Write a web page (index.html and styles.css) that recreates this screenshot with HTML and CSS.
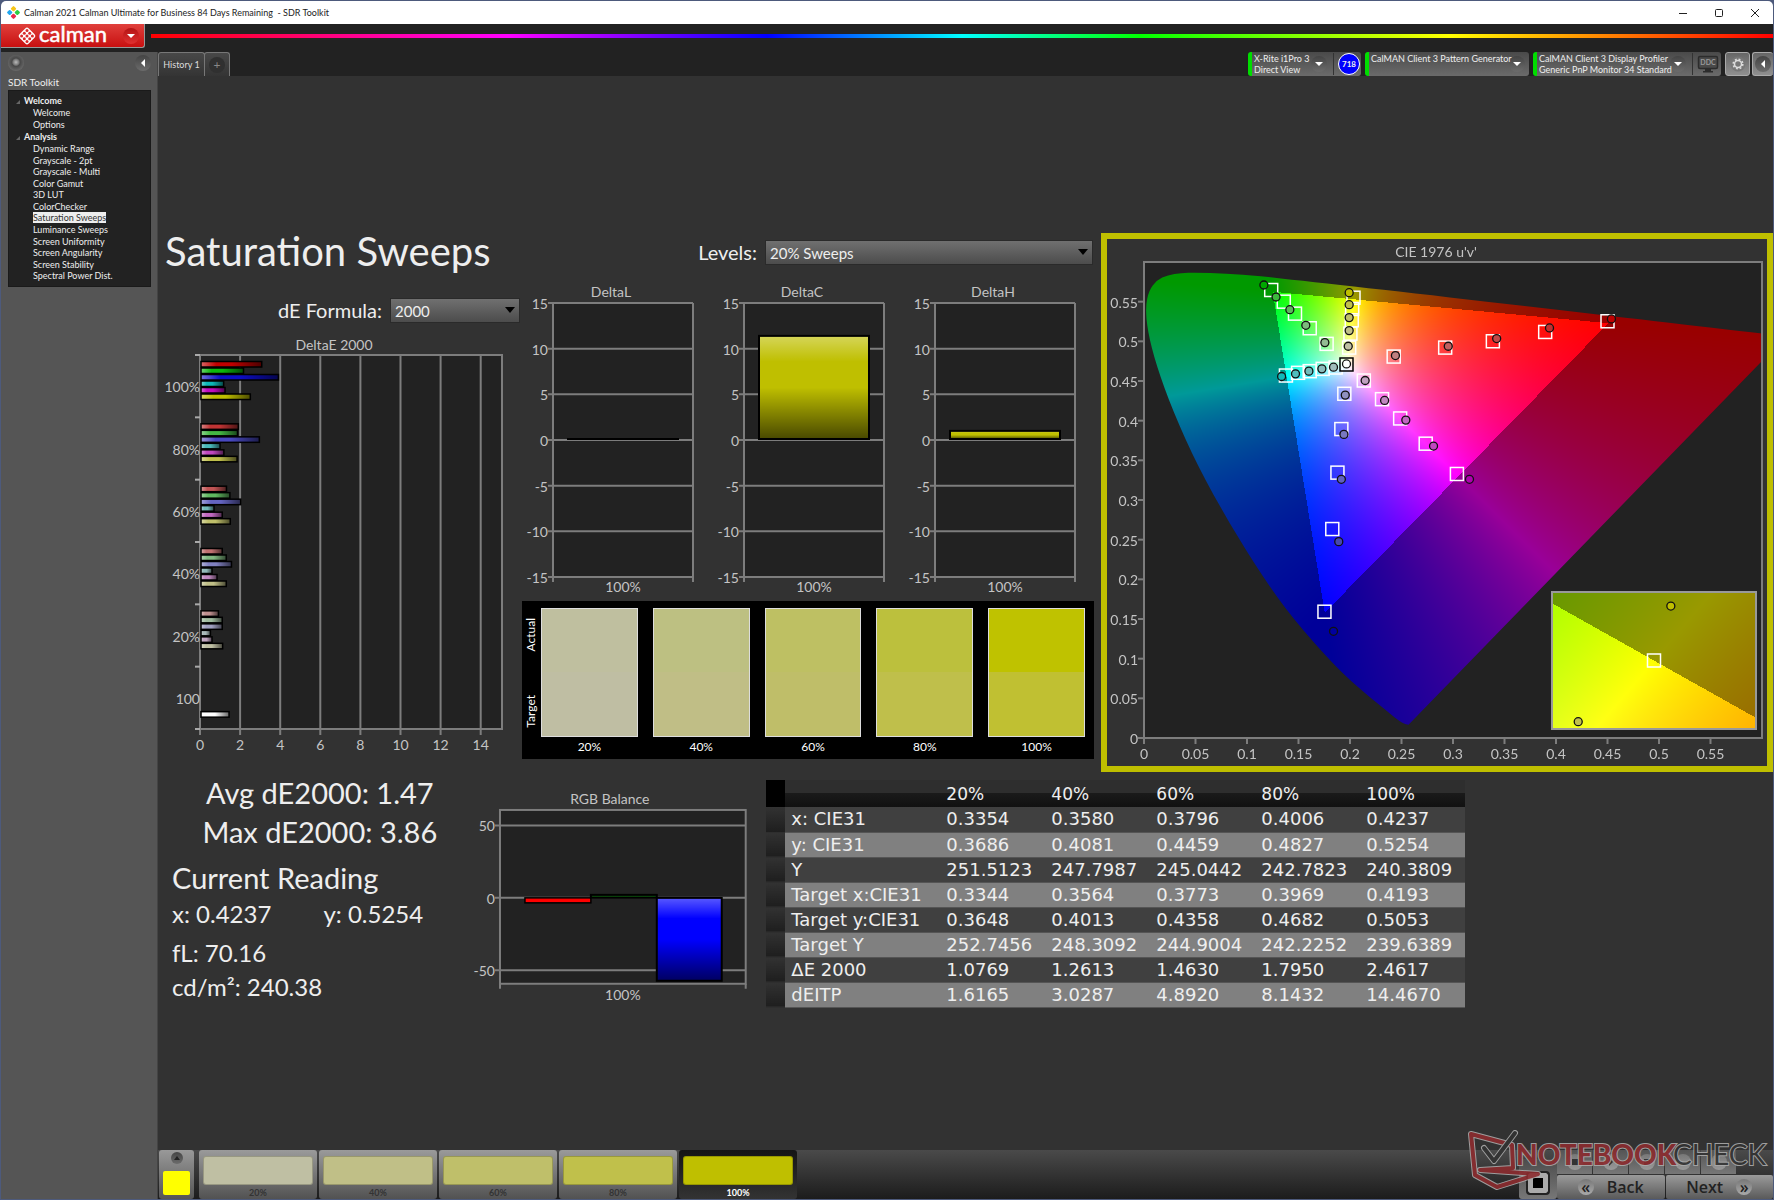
FILE: index.html
```html
<!DOCTYPE html>
<html lang="en">
<head>
    <meta charset="UTF-8">
    <meta name="viewport" content="width=device-width, initial-scale=1.0">
    <title>Calman 2021 - SDR Toolkit</title>
    <link rel="stylesheet" href="styles.css">
</head>
<body>
    <!-- shared bar shading -->
    <svg class="defs" width="0" height="0" aria-hidden="true">
        <defs>
            <linearGradient id="shadeV" x1="0" y1="0" x2="0" y2="1">
                <stop offset="0" stop-color="#fff" stop-opacity="0.35"/>
                <stop offset="0.25" stop-color="#fff" stop-opacity="0"/>
                <stop offset="0.5" stop-color="#000" stop-opacity="0"/>
                <stop offset="1" stop-color="#000" stop-opacity="0.62"/>
            </linearGradient>
            <linearGradient id="shadeH" x1="0" y1="0" x2="1" y2="0">
                <stop offset="0" stop-color="#fff" stop-opacity="0.4"/>
                <stop offset="0.25" stop-color="#fff" stop-opacity="0"/>
                <stop offset="0.5" stop-color="#000" stop-opacity="0"/>
                <stop offset="1" stop-color="#000" stop-opacity="0.6"/>
            </linearGradient>
        </defs>
    </svg>

    <div class="titlebar">
        <svg class="app-icon" width="13" height="13" viewBox="0 0 13 13">
            <rect x="4.4" y="0.6" width="4.2" height="4.2" rx="1" fill="#f6c518" transform="rotate(45 6.5 2.7)"/>
            <rect x="0.6" y="4.4" width="4.2" height="4.2" rx="1" fill="#22a7f0" transform="rotate(45 2.7 6.5)"/>
            <rect x="8.2" y="4.4" width="4.2" height="4.2" rx="1" fill="#2ecc40" transform="rotate(45 10.3 6.5)"/>
            <rect x="4.4" y="8.2" width="4.2" height="4.2" rx="1" fill="#e8274b" transform="rotate(45 6.5 10.3)"/>
        </svg>
        <span class="window-title">Calman 2021 Calman Ultimate for Business 84 Days Remaining &nbsp;- SDR Toolkit</span>
        <div class="window-buttons">
            <button aria-label="Minimize"><svg width="10" height="10" viewBox="0 0 10 10"><path d="M1 5.5h8" stroke="#222"/></svg></button>
            <button aria-label="Maximize"><svg width="10" height="10" viewBox="0 0 10 10"><rect x="1.5" y="1.5" width="7" height="7" rx="1" fill="none" stroke="#222"/></svg></button>
            <button aria-label="Close"><svg width="10" height="10" viewBox="0 0 10 10"><path d="M1 1l8 8M9 1l-8 8" stroke="#222"/></svg></button>
        </div>
    </div>

    <div class="brandbar">
        <button class="brand">
            <svg width="20" height="20" viewBox="0 0 20 20">
                <rect x="3.4" y="3.4" width="13.2" height="13.2" rx="2.5" fill="#fff" transform="rotate(45 10 10)"/>
                <g fill="#d92a2a">
                    <circle cx="10" cy="4.6" r="1.5"/><circle cx="7.3" cy="7.3" r="1.5"/><circle cx="12.7" cy="7.3" r="1.5"/>
                    <circle cx="4.6" cy="10" r="1.5"/><circle cx="10" cy="10" r="1.5"/><circle cx="15.4" cy="10" r="1.5"/>
                    <circle cx="7.3" cy="12.7" r="1.5"/><circle cx="12.7" cy="12.7" r="1.5"/><circle cx="10" cy="15.4" r="1.5"/>
                </g>
            </svg>
            <span class="brand-name">calman</span>
            <span class="round red"><i class="tri down"></i></span>
        </button>
        <div class="rainbow"></div>
    </div>

    <div class="layout">
        <aside class="sidebar">
            <div class="sidebar-top">
                <span class="round knob"></span>
                <button class="round" aria-label="Collapse"><i class="tri left"></i></button>
            </div>
            <div class="sidebar-title">SDR Toolkit</div>
            <nav class="tree">
                <h4>Welcome</h4>
                <ul>
                    <li><a href="#">Welcome</a></li>
                    <li><a href="#">Options</a></li>
                </ul>
                <h4>Analysis</h4>
                <ul>
                    <li><a href="#">Dynamic Range</a></li>
                    <li><a href="#">Grayscale - 2pt</a></li>
                    <li><a href="#">Grayscale - Multi</a></li>
                    <li><a href="#">Color Gamut</a></li>
                    <li><a href="#">3D LUT</a></li>
                    <li><a href="#">ColorChecker</a></li>
                    <li><a href="#" class="active">Saturation Sweeps</a></li>
                    <li><a href="#">Luminance Sweeps</a></li>
                    <li><a href="#">Screen Uniformity</a></li>
                    <li><a href="#">Screen Angularity</a></li>
                    <li><a href="#">Screen Stability</a></li>
                    <li><a href="#">Spectral Power Dist.</a></li>
                </ul>
            </nav>
        </aside>

        <main class="main">
            <div class="toolbar">
                <button class="tab">History 1</button>
                <button class="tab add" aria-label="Add history"><span class="round plus">+</span></button>
                <div class="devices">
                    <div class="device meter">
                        <button class="device-name">X-Rite i1Pro 3<br>Direct View</button>
                        <span class="round"><i class="tri down"></i></span>
                        <span class="split"></span>
                        <span class="badge">718</span>
                    </div>
                    <div class="device generator">
                        <button class="device-name">CalMAN Client 3 Pattern Generator</button>
                        <span class="round"><i class="tri down"></i></span>
                    </div>
                    <div class="device display">
                        <button class="device-name">CalMAN Client 3 Display Profiler<br>Generic PnP Monitor 34 Standard</button>
                        <span class="round"><i class="tri down"></i></span>
                        <span class="split"></span>
                        <svg class="monitor" width="22" height="18" viewBox="0 0 22 18">
                            <rect x="1.5" y="1.5" width="19" height="12" rx="1.5" fill="#4a4a4a" stroke="#2c2c2c" stroke-width="1.5"/>
                            <path d="M8 14h6v2H8zM6 16h10v1.5H6z" fill="#2c2c2c"/>
                            <text x="11" y="10" text-anchor="middle" class="ddc">DDC</text>
                        </svg>
                    </div>
                    <button class="square" aria-label="Settings">
                        <svg width="16" height="16" viewBox="0 0 16 16">
                            <circle cx="8" cy="8" r="7.5" fill="#777"/>
                            <circle cx="8" cy="8" r="3.5" fill="none" stroke="#ddd" stroke-width="1.5"/>
                            <circle cx="8" cy="8" r="4.8" fill="none" stroke="#ddd" stroke-width="1.6" stroke-dasharray="1.9 1.87"/>
                        </svg>
                    </button>
                    <button class="square last" aria-label="Expand"><span class="round"><i class="tri left"></i></span></button>
                </div>
            </div>

            <div class="workspace">
                <section class="upper">
                    <div class="col-left">
                        <h1>Saturation Sweeps</h1>
                        <div class="field formula">
                            <label for="formula">dE Formula:</label>
                            <div class="select"><select id="formula"><option>2000</option></select></div>
                        </div>
                        <svg id="deltaE" class="chart" viewBox="0 0 360 430"></svg>
                    </div>
                    <div class="col-mid">
                        <div class="field levels">
                            <label for="levels">Levels:</label>
                            <div class="select"><select id="levels"><option>20% Sweeps</option></select></div>
                        </div>
                        <div class="deltas">
                            <svg id="deltaL" class="chart" viewBox="0 0 191 320"></svg>
                            <svg id="deltaC" class="chart" viewBox="0 0 191 320"></svg>
                            <svg id="deltaH" class="chart" viewBox="0 0 191 320"></svg>
                        </div>
                        <div class="swatches">
                            <div class="side"><span>Actual</span><span>Target</span></div>
                            <div class="swatch s20"><div class="pair"></div><span>20%</span></div>
                            <div class="swatch s40"><div class="pair"></div><span>40%</span></div>
                            <div class="swatch s60"><div class="pair"></div><span>60%</span></div>
                            <div class="swatch s80"><div class="pair"></div><span>80%</span></div>
                            <div class="swatch s100"><div class="pair"></div><span>100%</span></div>
                        </div>
                    </div>
                    <div class="cie">
                        <canvas id="cieCanvas" width="660" height="527"></canvas>
                        <svg id="cieAxes" class="chart" viewBox="0 0 660 527"></svg>
                    </div>
                </section>

                <section class="lower">
                    <div class="readings">
                        <p class="big center">Avg dE2000: 1.47</p>
                        <p class="big center">Max dE2000: 3.86</p>
                        <p class="big current">Current Reading</p>
                        <p class="xy"><span>x: 0.4237</span><span>y: 0.5254</span></p>
                        <p class="lum">fL: 70.16</p>
                        <p>cd/m²: 240.38</p>
                    </div>
                    <svg id="rgb" class="chart" viewBox="0 0 289 240"></svg>
                    <table class="data">
                        <thead>
                            <tr><th class="handle"></th><th></th><th>20%</th><th>40%</th><th>60%</th><th>80%</th><th>100%</th></tr>
                        </thead>
                        <tbody>
                            <tr><td class="handle"></td><td>x: CIE31</td><td>0.3354</td><td>0.3580</td><td>0.3796</td><td>0.4006</td><td>0.4237</td></tr>
                            <tr><td class="handle"></td><td>y: CIE31</td><td>0.3686</td><td>0.4081</td><td>0.4459</td><td>0.4827</td><td>0.5254</td></tr>
                            <tr><td class="handle"></td><td>Y</td><td>251.5123</td><td>247.7987</td><td>245.0442</td><td>242.7823</td><td>240.3809</td></tr>
                            <tr><td class="handle"></td><td>Target x:CIE31</td><td>0.3344</td><td>0.3564</td><td>0.3773</td><td>0.3969</td><td>0.4193</td></tr>
                            <tr><td class="handle"></td><td>Target y:CIE31</td><td>0.3648</td><td>0.4013</td><td>0.4358</td><td>0.4682</td><td>0.5053</td></tr>
                            <tr><td class="handle"></td><td>Target Y</td><td>252.7456</td><td>248.3092</td><td>244.9004</td><td>242.2252</td><td>239.6389</td></tr>
                            <tr><td class="handle"></td><td>ΔE 2000</td><td>1.0769</td><td>1.2613</td><td>1.4630</td><td>1.7950</td><td>2.4617</td></tr>
                            <tr><td class="handle"></td><td>dEITP</td><td>1.6165</td><td>3.0287</td><td>4.8920</td><td>8.1432</td><td>14.4670</td></tr>
                        </tbody>
                    </table>
                </section>
            </div>

            <div class="bottombar">
                <button class="current-color" aria-label="Current color"><span class="round up"><i class="tri"></i></span><span class="chip"></span></button>
                <button class="level l20"><span class="chip"></span>20%</button>
                <button class="level l40"><span class="chip"></span>40%</button>
                <button class="level l60"><span class="chip"></span>60%</button>
                <button class="level l80"><span class="chip"></span>80%</button>
                <button class="level l100 selected"><span class="chip"></span>100%</button>
                <div class="controls">
                    <button class="stop" aria-label="Stop"><span></span></button>
                    <div class="nav">
                        <div class="transport">
                            <button aria-label="Stop reading"><span class="round"><i class="sq"></i></span></button>
                            <button aria-label="Play"><span class="round"><i class="tri play"></i></span></button>
                            <button aria-label="Series"><span class="round"><i class="sq"></i></span></button>
                            <button aria-label="Loop"><span class="round"></span></button>
                            <button aria-label="Refresh"><span class="round"></span></button>
                        </div>
                        <div class="pager">
                            <button><span class="round">«</span>Back</button>
                            <button>Next<span class="round">»</span></button>
                        </div>
                    </div>
                </div>
            </div>
        </main>
    </div>

    <svg class="watermark" width="306" height="64" viewBox="0 0 306 64">
        <g fill="none" stroke-linejoin="round" stroke-linecap="round">
            <path d="M3 6L44 17L45 40L12 42L70 46L29 59L7 47Z" stroke="#aaa" stroke-width="6"/>
            <path d="M3 6L44 17L45 40L12 42L70 46L29 59L7 47Z" stroke="#8c2c2f" stroke-width="4"/>
            <path d="M16 20L26 33L47 5" stroke="#aaa" stroke-width="6"/>
            <path d="M16 20L26 33L47 5" stroke="#333" stroke-width="4"/>
        </g>
        <text x="48" y="37" class="wm-note">NOTEBOOK</text>
        <text x="205" y="37" class="wm-check">CHECK</text>
    </svg>

    <script src="charts.js"></script>
</body>
</html>
```
FILE: styles.css
```css
* {
    box-sizing: border-box;
}
body {
    margin: 0;
    padding: 1px;
    min-height: 100vh;
    display: flex;
    flex-direction: column;
    background: #4d5a7c;
    font-family: Lato, "Open Sans", sans-serif;
    color: #eee;
}
button {
    font: inherit;
    color: inherit;
    border: 0;
    padding: 0;
    background: none;
}
h1, h4, p, ul {
    margin: 0;
    padding: 0;
}
.defs {
    position: absolute;
}

/* window frame */
.titlebar {
    height: 23px;
    display: flex;
    align-items: center;
    gap: 4px;
    padding: 0 13px 0 6px;
    background: #fff;
    color: #222;
    font-size: 9px;
    border-radius: 5px 5px 0 0;
}
.window-title {
    flex: 1;
}
.window-buttons {
    display: flex;
    gap: 26px;
}
.window-buttons button {
    width: 10px;
    height: 10px;
    line-height: 0;
}
.brandbar {
    height: 28px;
    display: flex;
    gap: 6px;
    background: #222;
}
.brand {
    width: 144px;
    height: 24px;
    display: flex;
    align-items: center;
    gap: 2px;
    padding: 0 5px 0 16px;
    background: linear-gradient(#e0403c, #c81010);
    border-radius: 0 0 3px 0;
    border-right: 1px solid #999;
    border-bottom: 1px solid #999;
}
.brand-name {
    flex: 1;
    font-size: 22px;
    line-height: 20px;
    text-align: left;
    padding-bottom: 3px;
    color: #fff;
    -webkit-text-stroke: 0.5px #fff;
}
.rainbow {
    flex: 1;
    height: 4px;
    margin-top: 10px;
    background: linear-gradient(to right, #f00, #f0f 22%, #00f 38%, #0ff 50%, #0f0 61%, #ff0 80%, #f00);
}

/* small round buttons */
.round {
    width: 16px;
    height: 16px;
    flex: none;
    display: flex;
    align-items: center;
    justify-content: center;
    border-radius: 50%;
    background: linear-gradient(#444, #6c6c6c);
}
.round.red {
    background: linear-gradient(#b41414, #e03030);
}
.round.knob {
    background: radial-gradient(circle at 50% 45%, #bbb 0, #777 25%, #484848 35%, #666 70%);
}
.tri {
    border: 4px solid transparent;
}
.tri.down {
    border-top-color: #fff;
    border-bottom-width: 0;
}
.tri.left {
    border-right-color: #fff;
    border-left-width: 0;
}

.layout {
    flex: 1;
    display: flex;
}

/* workflow tree */
.sidebar {
    width: 157px;
    padding: 3px 6px 3px 7px;
    background: #555;
    border-right: 1px solid #444;
}
.sidebar-top {
    display: flex;
    justify-content: space-between;
}
.sidebar-title {
    margin-top: 4px;
    font-size: 10px;
    line-height: 14px;
}
.tree {
    margin-top: 1px;
    height: 197px;
    padding: 4px 0 0 15px;
    background: #222;
    border: 1px solid #1a1a1a;
    font-size: 9px;
}
.tree h4 {
    position: relative;
    font-size: 9px;
    line-height: 12px;
}
.tree h4::before {
    content: "";
    position: absolute;
    left: -8px;
    top: 5px;
    border: 2px solid transparent;
    border-right-color: #666;
    border-bottom-color: #666;
}
.tree ul {
    height: 24px;
    padding-left: 9px;
    list-style: none;
    display: grid;
    grid-auto-rows: 1fr;
}
.tree ul:last-child {
    height: 139px;
}
.tree li {
    line-height: 11px;
}
.tree a {
    color: #eee;
    text-decoration: none;
}
.tree .active {
    background: #eee;
    color: #333;
}

/* toolbar */
.main {
    flex: 1;
    min-width: 0;
    display: flex;
    flex-direction: column;
    background: #323232;
}
.toolbar {
    height: 24px;
    display: flex;
    background: #222;
}
.tab {
    width: 47px;
    font-size: 9px;
    color: #ddd;
    background: linear-gradient(#484848, #343434);
    border: 1px solid #777;
    border-bottom: 0;
    border-radius: 3px 3px 0 0;
}
.tab.add {
    width: 26px;
    padding-left: 4px;
    margin-left: -1px;
}
.round.plus {
    background: #303030;
    color: #888;
    font-size: 12px;
}
.devices {
    margin-left: auto;
    display: flex;
    gap: 4px;
}
.device {
    display: flex;
    align-items: center;
    gap: 4px;
    padding: 0 4px 0 2px;
    border-left: 4px solid #0d0;
    border-radius: 3px;
    background: linear-gradient(#4a4a4a, #6b6b6b);
}
/* long names run over the edge of the round button */
.device-name {
    position: relative;
    z-index: 1;
    flex: 1;
    min-width: 0;
    align-self: flex-start;
    font-size: 9px;
    line-height: 11px;
    padding-top: 1px;
    text-align: left;
    white-space: nowrap;
}
.meter {
    width: 113px;
    padding-right: 1px;
}
.generator {
    width: 164px;
}
.display {
    width: 188px;
    padding-right: 2px;
}
.split {
    width: 1px;
    height: 22px;
    margin-left: 2px;
    background: #333;
}
.badge {
    width: 22px;
    height: 22px;
    flex: none;
    border: 1px solid #fff;
    border-radius: 50%;
    background: #00f;
    font-size: 8px;
    font-weight: bold;
    line-height: 20px;
    text-align: center;
}
.monitor {
    flex: none;
}
.ddc {
    font-size: 7px;
    font-weight: bold;
    fill: #999;
}
.square {
    width: 25px;
    display: flex;
    align-items: center;
    justify-content: center;
    border: 1px solid #aaa;
    border-radius: 3px;
    background: linear-gradient(#666, #909090);
}
.square.last {
    width: 21px;
    margin-left: -2px;
    border-right: 0;
}

/* workspace */
.workspace {
    flex: 1;
    padding-top: 157px;
}
.upper {
    display: grid;
    grid-template-columns: 360fr 583fr 672fr;
}
.chart {
    display: block;
    width: 100%;
    height: auto;
    overflow: visible;
    font-size: 14px;
    fill: #c4c4c4;
}
h1 {
    padding-left: 7px;
    font-size: 40px;
    font-weight: normal;
    line-height: 44px;
    margin-bottom: 24px;
    margin-top: -4px;
}
.field {
    display: flex;
    align-items: center;
    justify-content: flex-end;
    gap: 8px;
    font-size: 20px;
    line-height: 24px;
}
.select {
    position: relative;
    width: 130px;
}
.select::after {
    content: "";
    position: absolute;
    right: 5px;
    top: 10px;
    border: 5px solid transparent;
    border-top: 6px solid #000;
    border-bottom: 0;
}
.select select {
    width: 100%;
    height: 25px;
    padding: 2px 4px 0;
    appearance: none;
    border: 1px solid #2a2a2a;
    border-radius: 0;
    background: linear-gradient(#707070, #4c4c4c);
    color: #eee;
    font-family: inherit;
    font-size: 15px;
}
.formula {
    margin-right: -2px;
}
.levels {
    padding: 6px 8px 0 0;
}
.levels .select {
    width: 328px;
}
.deltas {
    display: grid;
    grid-template-columns: repeat(3, 1fr);
    padding: 16px 10px 0 0;
}
.swatches {
    display: flex;
    gap: 15px;
    margin: 0 7px 0 4px;
    padding: 7px 9px 0 0;
    height: 158px;
    background: #000;
    font-size: 12px;
    color: #fff;
}
.side {
    width: 16px;
    height: 130px;
    margin-right: -12px;
    padding: 10px 0;
    display: flex;
    flex-direction: column;
    justify-content: space-between;
    align-items: center;
}
.side span {
    writing-mode: vertical-rl;
    transform: rotate(180deg);
}
.swatch {
    flex: 1;
    text-align: center;
    line-height: 20px;
}
.pair {
    height: 129px;
    border: 1px solid #ddd;
}
.s20 .pair {
    background: linear-gradient(#bfbf9f 50%, #bfbea3 50%);
}
.s40 .pair {
    background: linear-gradient(#bdc082 50%, #c0be86 50%);
}
.s60 .pair {
    background: linear-gradient(#bec063 50%, #bfbe69 50%);
}
.s80 .pair {
    background: linear-gradient(#bcc03d 50%, #bfbf4b 50%);
}
.s100 .pair {
    background: linear-gradient(#bfc200 50%, #c0c032 50%);
}
.cie {
    display: grid;
    align-self: start;
    border: 6px solid #bfbf00;
}
.cie canvas, .cie svg {
    grid-area: 1 / 1;
    width: 100%;
}

/* readings and table */
.lower {
    display: grid;
    grid-template-columns: 320fr 289fr 698fr 308fr;
    align-items: start;
}
.readings {
    padding: 1px 0 0 14px;
    font-size: 24px;
    line-height: 34px;
}
.readings .big {
    font-size: 29px;
    line-height: 39px;
}
.readings .center {
    padding-right: 10px;
    text-align: center;
}
.readings .current {
    margin-top: 7px;
}
.readings .xy {
    display: flex;
    gap: 52px;
}
.readings .lum {
    margin-top: 5px;
}
.data {
    width: 100%;
    margin-top: 8px;
    border-collapse: collapse;
    table-layout: fixed;
    font-family: "DejaVu Sans", "Open Sans", sans-serif;
    font-size: 18px;
    line-height: 24px;
}
.data th, .data td {
    padding: 0 0 0 6px;
    text-align: left;
    font-weight: normal;
    white-space: nowrap;
}
.data th {
    height: 27px;
    width: 105px;
    font-size: 17px;
    background: linear-gradient(#2e2e2e 50%, #1a1a1a 50%, #111);
}
.data th:nth-child(2) {
    width: 155px;
}
.data td {
    height: 25px;
    background: #404040;
    border-bottom: 1px solid #555;
}
.data tbody tr:nth-child(even) td {
    background: #808080;
}
.data th.handle {
    width: 19px;
    background: #000;
}
.data tbody tr td.handle, .data tbody tr:nth-child(even) td.handle {
    background: linear-gradient(#323232, #1e1e1e);
    border-bottom-color: #2e2e2e;
}

/* bottom bar */
.bottombar {
    height: 49px;
    display: flex;
    gap: 2px;
    padding-left: 1px;
    background: linear-gradient(#4a4a4a, #1c1c1c);
}
.current-color {
    width: 35px;
    margin-right: 3px;
    padding: 2px 4px 4px;
    display: flex;
    flex-direction: column;
    align-items: center;
    gap: 7px;
    border-radius: 3px;
    background: linear-gradient(#999, #555);
}
.current-color .chip {
    width: 27px;
    height: 24px;
    border-radius: 2px;
    background: #ff0;
}
.round.up {
    width: 12px;
    height: 12px;
}
.up .tri {
    border-width: 0 3px 4px;
    border-bottom-color: #222;
}
.level {
    width: 118px;
    padding: 4px 4px 0;
    border-radius: 3px;
    background: linear-gradient(#9a9a9a, #525252);
    font-size: 9px;
    font-weight: bold;
    line-height: 10px;
    color: #333;
}
.level .chip {
    display: block;
    height: 29px;
    margin-bottom: 3px;
    border: 1px solid rgba(0, 0, 0, 0.2);
    border-radius: 3px;
}
.level.selected {
    background: linear-gradient(#151515, #333);
    color: #fff;
}
.l20 .chip {
    background: #bfbfa3;
}
.l40 .chip {
    background: #c0bf87;
}
.l60 .chip {
    background: #bfbf6a;
}
.l80 .chip {
    background: #c0c04b;
}
.l100 .chip {
    background: #bfbf00;
}
.controls {
    margin-left: auto;
    display: flex;
    align-items: flex-end;
}
.stop {
    width: 38px;
    height: 40px;
    display: flex;
    align-items: flex-end;
    justify-content: center;
    padding-bottom: 4px;
    border-radius: 3px;
    background: linear-gradient(#4c4c4c, #777);
}
.stop span {
    width: 24px;
    height: 24px;
    border: 2px solid #222;
    border-radius: 4px;
    background: #000;
    box-shadow: inset 0 0 0 5px #aaa;
}
.nav {
    width: 216px;
}
.transport {
    display: flex;
    gap: 1px;
    margin-bottom: 1px;
}
.transport button {
    width: 35px;
    height: 24px;
    display: flex;
    justify-content: center;
    align-items: center;
    background: linear-gradient(#555, #777);
}
.transport .round {
    background: linear-gradient(#777, #999);
}
.sq {
    width: 6px;
    height: 6px;
    background: #333;
}
.tri.play {
    border-left-color: #333;
    border-right-width: 0;
}
.pager {
    display: flex;
    gap: 1px;
}
.pager button {
    flex: 1;
    height: 24px;
    display: flex;
    align-items: center;
    justify-content: center;
    gap: 13px;
    border-radius: 2px;
    background: linear-gradient(#9a9a9a, #5a5a5a);
    color: #222;
    font-family: "Open Sans", sans-serif;
    font-size: 16px;
    font-weight: 600;
}
.pager .round {
    background: linear-gradient(#777, #aaa);
}

.watermark {
    position: absolute;
    right: 0;
    bottom: 8px;
    opacity: 0.9;
}
.wm-note, .wm-check {
    font-size: 28px;
    stroke: #aaa;
    stroke-width: 2px;
    paint-order: stroke;
}
.wm-note {
    font-weight: 900;
    fill: #8c2c2f;
}
.wm-check {
    fill: #333;
}
```
FILE: charts.js
```js
const GRID = '#7d7d7d';
const PLOT = '#222';

function line(x1, y1, x2, y2, color = GRID, w = 2) {
    return `<line x1="${x1}" y1="${y1}" x2="${x2}" y2="${y2}" stroke="${color}" stroke-width="${w}"/>`;
}
function rect(x, y, w, h, attrs) {
    return `<rect x="${x}" y="${y}" width="${w}" height="${h}" ${attrs}/>`;
}
function text(x, y, str, anchor = 'middle') {
    return `<text x="${x}" y="${y}" text-anchor="${anchor}">${str}</text>`;
}
function bar(x, y, w, h, color, shade, stroke = 2) {
    return rect(x, y, w, h, `fill="${color}"`) +
        rect(x, y, w, h, `fill="url(#${shade})" stroke="#000" stroke-width="${stroke}"`);
}

// DeltaL / DeltaC / DeltaH
function drawDelta(id, title, value) {
    const left = 35, right = 175, top = 22, bottom = 296;
    const y = v => top + (15 - v) * (bottom - top) / 30;
    let s = rect(left, top, right - left, bottom - top, `fill="${PLOT}"`);
    for (let v = 15; v >= -15; v -= 5) {
        s += line(left - 5, y(v), right, y(v));
        s += text(30, y(v) + 6, v, 'end');
    }
    s += line(left, top, left, bottom + 5) + line(right, top, right, bottom + 5);
    if (value > 0.2) {
        s += bar(left + 15, y(value), 110, y(0) - y(value) - 1, '#bfbf00', 'shadeV');
    } else {
        s += line(left + 14, y(0) - 1, left + 126, y(0) - 1, '#000');
    }
    s += text(93, 16, title) + text(105, 311, '100%');
    document.getElementById(id).innerHTML = s;
}
drawDelta('deltaL', 'DeltaL', 0.1);
drawDelta('deltaC', 'DeltaC', 11.4);
drawDelta('deltaH', 'DeltaH', 1);

// DeltaE 2000, horizontal bars grouped by level
const groups = [
    ['100%', [3.03, 2.12, 3.86, 1.13, 1.2, 2.46], ['#c00000', '#0cb80c', '#0c0cc4', '#0cb8b8', '#c00cc0', '#bfbf00']],
    ['80%', [1.86, 1.82, 2.91, 0.95, 1.14, 1.8], ['#c03434', '#44b844', '#4848c0', '#48b8b8', '#c048c0', '#bfbf4b']],
    ['60%', [1.27, 1.44, 1.98, 0.65, 1.06, 1.46], ['#c05454', '#60b860', '#6464c0', '#70b8b8', '#c068c0', '#bfbf6a']],
    ['40%', [1.06, 1.26, 1.52, 0.55, 0.8, 1.26], ['#c07070', '#80b880', '#8080c0', '#90b8b8', '#c088c0', '#c0bf87']],
    ['20%', [0.87, 1.06, 1.06, 0.47, 0.55, 1.08], ['#c09090', '#a0bca0', '#a0a0c0', '#a8b8b8', '#c0a4c0', '#bfbfa3']],
    ['100', [null, null, null, null, null, 1.4], [, , , , , '#fff']]
];
function drawDeltaE() {
    const left = 42, right = 344, top = 32, bottom = 406, unit = 20.05;
    const step = (bottom - top) / groups.length;
    let s = rect(left, top, right - left, bottom - top, `fill="${PLOT}" stroke="${GRID}" stroke-width="2"`);
    for (let v = 0; v <= 14; v += 2) {
        const x = left + v * unit;
        s += line(x, top, x, bottom + 6) + text(x, 427, v);
    }
    groups.forEach(([label, values, colors], g) => {
        const y = top + g * step;
        s += line(left - 5, y, left, y, '#aaa');
        s += text(left, y + step / 2 + 6, label, 'end');
        values.forEach((v, i) => {
            const offset = label === '100' ? 6 : 0;
            if (v) s += bar(left + 1, y + 6.5 + i * 6.5 + offset, v * unit, 5.5, colors[i], 'shadeH', 1.5);
        });
    });
    s += line(left - 5, bottom, left, bottom, '#aaa');
    s += text(176, 27, 'DeltaE 2000');
    document.getElementById('deltaE').innerHTML = s;
}
drawDeltaE();

// RGB Balance
function drawRgb() {
    const left = 22, right = 268, top = 38, bottom = 212;
    const zero = 126, unit = 1.45;
    let s = rect(left, top, right - left, bottom - top, `fill="${PLOT}" stroke="${GRID}" stroke-width="2"`);
    [50, 0, -50].forEach(v => {
        s += line(left - 5, zero - v * unit, right, zero - v * unit) + text(17, zero - v * unit + 6, v, 'end');
    });
    s += line(left, bottom, left, bottom + 5) + line(right, bottom, right, bottom + 5);
    s += rect(47, zero, 66, 5, 'fill="#f00" stroke="#000" stroke-width="1.5"');
    s += bar(113, zero - 3, 66, 3, '#0b4d0b', 'shadeV');
    s += bar(179, zero, 65, 83, '#00f', 'shadeV');
    s += text(132, 32, 'RGB Balance') + text(145, 228, '100%');
    document.getElementById('rgb').innerHTML = s;
}
drawRgb();

// CIE 1976 diagram
const cie = { left: 37, top: 23, w: 618, h: 476, max: 0.6 };
const inset = { left: 445, top: 353, w: 204, h: 137, x: 0.4193, y: 0.5053, dx: 0.0533, dy: 0.0506 };
const locus = [
    [0.1741, 0.0050], [0.1714, 0.0051], [0.1644, 0.0109], [0.1566, 0.0177], [0.1440, 0.0297], [0.1241, 0.0578],
    [0.1096, 0.0868], [0.0913, 0.1327], [0.0687, 0.2007], [0.0454, 0.2950], [0.0235, 0.4127], [0.0082, 0.5384],
    [0.0039, 0.6548], [0.0139, 0.7502], [0.0389, 0.8120], [0.0743, 0.8338], [0.1142, 0.8262], [0.1547, 0.8059],
    [0.2296, 0.7543], [0.3016, 0.6923], [0.3731, 0.6245], [0.4441, 0.5547], [0.5125, 0.4866], [0.5752, 0.4242],
    [0.6270, 0.3725], [0.6658, 0.3340], [0.6915, 0.3083], [0.7190, 0.2809], [0.7347, 0.2653]
];
const px = u => cie.left + u / cie.max * cie.w;
const py = v => cie.top + cie.h - v / cie.max * cie.h;

// chromaticity to a display color, dimmed outside the sRGB triangle
function colorAt(x, y) {
    const X = x / y, Z = (1 - x - y) / y;
    const rgb = [
        3.2406 * X - 1.5372 - 0.4986 * Z,
        -0.9689 * X + 1.8758 + 0.0415 * Z,
        0.0557 * X - 0.2040 + 1.0570 * Z
    ];
    const dim = Math.min(...rgb) < 0 ? 0.6 : 1;
    const max = Math.max(...rgb);
    return rgb.map(c => 255 * dim * Math.max(c, 0) / max);
}
function paint(w, h, toXY) {
    const c = document.createElement('canvas');
    c.width = w;
    c.height = h;
    const ctx = c.getContext('2d');
    const img = ctx.createImageData(w, h);
    for (let j = 0; j < h; j++) {
        for (let i = 0; i < w; i++) {
            const [x, y] = toXY(i + 0.5, j + 0.5);
            const [r, g, b] = colorAt(x, y);
            img.data.set([r, g, b, 255], (j * w + i) * 4);
        }
    }
    ctx.putImageData(img, 0, 0);
    return c;
}
function drawCieCanvas() {
    const ctx = document.getElementById('cieCanvas').getContext('2d');
    ctx.fillStyle = PLOT;
    ctx.fillRect(cie.left, cie.top, cie.w, cie.h);

    const full = paint(cie.w, cie.h, (i, j) => {
        const u = i / cie.w * cie.max, v = (1 - j / cie.h) * cie.max;
        const d = 6 * u - 16 * v + 12;
        return [9 * u / d, 4 * v / d];
    });
    const pts = locus.map(([x, y]) => {
        const d = -2 * x + 12 * y + 3;
        return [px(4 * x / d), py(9 * y / d)];
    });
    ctx.save();
    ctx.beginPath();
    ctx.rect(cie.left, cie.top, cie.w, cie.h);
    ctx.clip();
    ctx.beginPath();
    ctx.moveTo(...pts[0]);
    for (let k = 1; k < pts.length - 1; k++) {
        const mx = (pts[k][0] + pts[k + 1][0]) / 2, my = (pts[k][1] + pts[k + 1][1]) / 2;
        ctx.quadraticCurveTo(pts[k][0], pts[k][1], mx, my);
    }
    ctx.lineTo(...pts[pts.length - 1]);
    ctx.closePath();
    ctx.clip();
    ctx.drawImage(full, cie.left, cie.top);
    ctx.restore();

    const zoomed = paint(inset.w, inset.h, (i, j) => [
        inset.x + (i / inset.w - 0.5) * inset.dx,
        inset.y - (j / inset.h - 0.5) * inset.dy
    ]);
    ctx.drawImage(zoomed, inset.left, inset.top);
}
drawCieCanvas();

// [target u, v, actual u, v, fill]
const points = [
    [0.1773, 0.4968, 0.1756, 0.4984, '#93bb93'], [0.1609, 0.5165, 0.1571, 0.5202, '#7cba7c'],
    [0.1466, 0.5349, 0.1416, 0.5399, '#5cb85c'], [0.1357, 0.5500, 0.1282, 0.5559, '#3cb83c'],
    [0.1235, 0.5647, 0.1164, 0.5710, '#00a800'],
    [0.1992, 0.4921, 0.1983, 0.4938, '#bfbfa3'], [0.2004, 0.5097, 0.1992, 0.5135, '#c0bf87'],
    [0.2017, 0.5265, 0.1992, 0.5299, '#bfbf6a'], [0.2021, 0.5408, 0.1992, 0.5462, '#c0c04b'],
    [0.2034, 0.5550, 0.1992, 0.5613, '#bfbf00'],
    [0.1861, 0.4670, 0.1840, 0.4674, '#a0bcbc'], [0.1735, 0.4653, 0.1727, 0.4653, '#8cbcbc'],
    [0.1609, 0.4624, 0.1601, 0.4624, '#70bcbc'], [0.1496, 0.4603, 0.1471, 0.4590, '#50bcbc'],
    [0.1378, 0.4569, 0.1336, 0.4557, '#10b8b8'],
    [0.2424, 0.4808, 0.2441, 0.4821, '#c08080'], [0.2924, 0.4921, 0.2954, 0.4938, '#c06060'],
    [0.3387, 0.5001, 0.3424, 0.5035, '#c04848'], [0.3895, 0.5118, 0.3937, 0.5169, '#c03030'],
    [0.4500, 0.5253, 0.4538, 0.5282, '#c00000'],
    [0.2134, 0.4506, 0.2147, 0.4506, '#c0a0c0'], [0.2311, 0.4271, 0.2336, 0.4255, '#c088c0'],
    [0.2487, 0.4028, 0.2542, 0.4007, '#c068c0'], [0.2735, 0.3710, 0.2811, 0.3680, '#c048c0'],
    [0.3038, 0.3328, 0.3160, 0.3261, '#b000b0'],
    [0.1945, 0.4339, 0.1954, 0.4322, '#9090c0'], [0.1916, 0.3894, 0.1941, 0.3827, '#7878c0'],
    [0.1878, 0.3345, 0.1916, 0.3261, '#6060c0'], [0.1828, 0.2634, 0.1891, 0.2475, '#4848b0'],
    [0.1752, 0.1592, 0.1840, 0.1345, '#0000a0']
];
function target(x, y, color = '#fff') {
    return rect(x - 6.5, y - 6.5, 13, 13, `fill="none" stroke="${color}" stroke-width="1.5"`);
}
function actual(x, y, fill) {
    return `<circle cx="${x}" cy="${y}" r="4" fill="${fill}" stroke="#111" stroke-width="1.3"/>`;
}
function drawCieAxes() {
    let s = text(329, 18, "CIE 1976 u'v'");
    s += rect(cie.left, cie.top, cie.w, cie.h, `fill="none" stroke="${GRID}" stroke-width="2"`);
    for (let i = 0; i < 12; i++) {
        const v = i * 0.05, label = String(+v.toFixed(2));
        s += line(px(v), py(0), px(v), py(0) + 6) + text(px(v), 520, label);
        s += line(px(0) - 6, py(v), px(0), py(v)) + text(31, py(v) + 6, label, 'end');
    }
    points.forEach(p => { s += target(px(p[0]), py(p[1])); });
    s += target(px(0.1966), py(0.4708), '#000');
    points.forEach(p => { s += actual(px(p[2]), py(p[3]), p[4]); });
    s += actual(px(0.1966), py(0.4715), '#fff');

    const ix = x => inset.left + ((x - inset.x) / inset.dx + 0.5) * inset.w;
    const iy = y => inset.top + (0.5 - (y - inset.y) / inset.dy) * inset.h;
    s += rect(inset.left, inset.top, inset.w, inset.h, 'fill="none" stroke="#999" stroke-width="2"');
    s += target(ix(0.4193), iy(0.5053));
    s += actual(ix(0.4237), iy(0.5254), '#bfbf00') + actual(ix(0.3995), iy(0.4827), '#c0c04b');
    document.getElementById('cieAxes').innerHTML = s;
}
drawCieAxes();
```
